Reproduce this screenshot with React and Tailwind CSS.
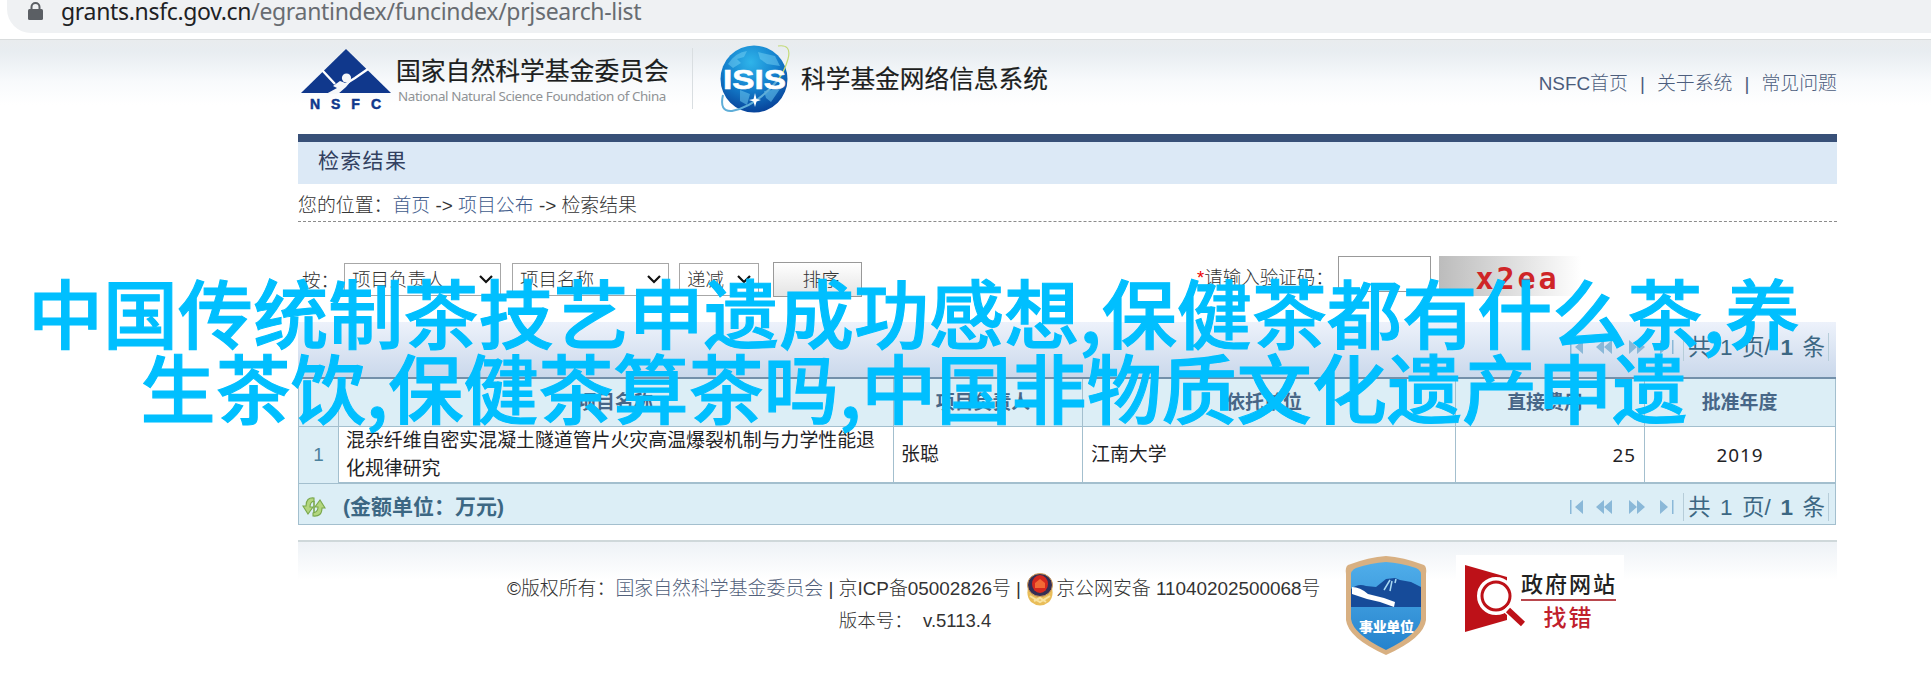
import clsx from 'clsx';

const columns = [
  { title: '项目名称', offset: 'pr-[2px]' },
  { title: '项目负责人', offset: 'pr-[10px]' },
  { title: '依托单位', offset: 'pr-[10px]' },
  { title: '直接费用', offset: 'pr-[10px]' },
  { title: '批准年度', offset: 'pr-[3px]' }
];

const grid = 'grid grid-cols-[40px_555px_189px_373px_189px_192px]';

function NsfcLogo() {
  return (
    <svg className="w-[90px] h-[64px] shrink-0" viewBox="0 0 90 64">
      <path d="M45 0 90 44H0Z" fill="#10388c" />
      <path d="M21 21 34 35M67 20 54 29 46 34" fill="none" stroke="#fff" strokeWidth="2.4" />
      <path d="M32 37 39 32Q42 33 44 34L50 32 45 38 37 45H25L36 39Z" fill="#f6f8fa" />
      <circle cx="45.5" cy="29" r="4.6" fill="#f6f8fa" />
      <text x="9" y="60" fontSize="14" fontWeight="700" fill="#10388c" stroke="#10388c" strokeWidth=".5" textLength="71" lengthAdjust="spacing" fontFamily="Liberation Sans, sans-serif">NSFC</text>
    </svg>
  );
}

function IsisLogo() {
  return (
    <svg className="w-[70px] h-[70px] shrink-0" viewBox="0 0 70 70">
      <defs>
        <radialGradient id="globe" cx=".45" cy=".25" r=".8">
          <stop offset="0" stopColor="#2fb4ea" />
          <stop offset=".5" stopColor="#1480cd" />
          <stop offset="1" stopColor="#063b93" />
        </radialGradient>
      </defs>
      <circle cx="34" cy="35" r="33.5" fill="url(#globe)" />
      <path d="M8 20Q16 8 27 7L24 13 17 15 21 19 13 24ZM38 8 55 12 60 22 47 20 40 15ZM20 46 30 50 27 61 20 57ZM44 47 60 45 51 58 46 54Z" fill="#74d0f3" opacity=".5" />
      <path d="M58 2Q72 0 68 15Q64 29 57 37" fill="none" stroke="#c3da76" strokeWidth="1.2" />
      <path d="M3 51Q-1 68 12 67Q36 62 57 37" fill="none" stroke="#5faed8" strokeWidth="2" />
      <text x="3" y="45" fontSize="28" fontWeight="700" fill="#fff" stroke="#fff" strokeWidth=".6" textLength="63" lengthAdjust="spacingAndGlyphs" fontFamily="Liberation Sans, sans-serif">ISIS</text>
      <path d="M35 49 36.5 55 41 56 36.5 57.5 35 63 33.5 57.5 29 56 33.5 55Z" fill="#fff" />
    </svg>
  );
}

function PoliceBadge() {
  return (
    <svg className="w-[28px] h-[33px] shrink-0" viewBox="0 0 28 33">
      <path d="M3 12Q-1 22 5 29Q14 36 23 29Q29 22 25 12Z" fill="#e9bd59" />
      <path d="M4 23 14 29 24 23M8 28 14 25 20 29" fill="none" stroke="#f8e3a0" strokeWidth="2" />
      <ellipse cx="14" cy="12" rx="12.5" ry="11.5" fill="#342e55" stroke="#d9a25b" strokeWidth="1" />
      <ellipse cx="14" cy="11" rx="8" ry="9" fill="#d5281f" />
      <path d="M9 10 14 6 19 10V15H9Z" fill="#f36a35" />
    </svg>
  );
}

function ShieldBadge() {
  return (
    <svg className="w-[82px] h-[100px] shrink-0" viewBox="0 0 82 100">
      <defs>
        <linearGradient id="shield" x1="0" y1="0" x2="0" y2="1">
          <stop offset="0" stopColor="#50aeea" />
          <stop offset="1" stopColor="#2583cd" />
        </linearGradient>
      </defs>
      <path d="M41 0Q58 1 79 9Q82 11 81 18V64Q79 82 41 99Q3 82 1 64V18Q0 11 3 9Q24 1 41 0Z" fill="#d8b082" />
      <path d="M41 6Q56 7 71 12Q77 14 76 22V63Q74 78 41 94Q8 78 6 63V22Q5 14 11 12Q26 7 41 6Z" fill="url(#shield)" />
      <path d="M6 33Q13 27 21 30L31 31 41 23 50 22 55 24 66 26 76 31V51H6Z" fill="#164b99" />
      <path d="M7 31Q15 31 23 38L39 42 50 46 49 51 35 46 22 43 7 38Z" fill="#fff" />
      <path d="M45 24 39 34M47 25 45 35M51 23 50 27" stroke="#a8d8f2" strokeWidth="1.5" />
      <text x="14" y="76" fontSize="14" fontWeight="900" fill="#fff" textLength="55" fontFamily="Noto Sans CJK SC, sans-serif">事业单位</text>
    </svg>
  );
}

function ErrorReportBadge() {
  return (
    <div className="flex w-[168px] h-[86px] bg-white pt-[9px] pl-[9px]">
      <svg className="w-[60px] h-[70px] shrink-0" viewBox="0 0 60 70">
        <path d="M0 1 42 13V56L0 68Z" fill="#bd1118" />
        <circle cx="31" cy="32" r="16" fill="#bd1118" stroke="#fff" strokeWidth="6" />
        <circle cx="31" cy="32" r="14" fill="#fff" stroke="#bd1118" strokeWidth="3" />
        <path d="M41 44 59 61" stroke="#fff" strokeWidth="9" />
        <path d="M43 46 58 60" stroke="#bd1118" strokeWidth="6" />
      </svg>
      <div className="w-[95px] ml-[-4px] mt-[8px] text-center">
        <div className="h-[29px] border-b-2 border-[#b9474d] text-[22px] leading-[25px] tracking-[2px] font-medium text-[#222] whitespace-nowrap">政府网站</div>
        <div className="text-[23px] leading-[35px] tracking-[2px] text-[#c0202b] font-medium">找错</div>
      </div>
    </div>
  );
}

function RefreshIcon() {
  return (
    <svg className="w-[24px] h-[20px] shrink-0" viewBox="0 0 24 20" fill="#b3d67f" stroke="#7aa84c" strokeWidth="1.1">
      <path d="M12 1Q4 0 4 9H1L6 17 11 10H8Q8 5 12 4Z" />
      <path d="M11 19Q20 20 20 11H23L18 3 13 10H16Q16 15 11 16Z" />
      <path d="M12 4V16" strokeWidth="1.6" />
    </svg>
  );
}

function Pager({ className }) {
  return (
    <div className={clsx('flex items-center text-[#3c6783]', className)}>
      <svg className="w-[104px] h-[16px] mr-[9px]" viewBox="0 0 104 16" fill="#8ab8d8">
        <path d="M0 1H1.5V15H0ZM13 1V15L5 8ZM34 1V15L26 8ZM42 1V15L34 8ZM59 1V15L67 8ZM67 1V15L75 8ZM90 1V15L98 8ZM102 1H103.5V15H102Z" />
      </svg>
      <div className="flex items-center justify-between w-[146px] h-[28px] border-x border-[#b6cdd9] pl-[4px] pr-[3px] pt-[2px] text-[22.5px] leading-[28px] whitespace-nowrap">
        <span>共</span><span>1</span><span>页/</span><b>1</b><span>条</span>
      </div>
    </div>
  );
}

function Select({ label, className }) {
  return (
    <div className={clsx('flex h-[33px] items-center justify-between border border-[#a7a7a7] bg-white pl-[7px] pr-[7px]', className)}>
      <span>{label}</span>
      <svg className="w-[14px] h-[9px]" viewBox="0 0 14 9" fill="none" stroke="#111" strokeWidth="2.2">
        <path d="m1 1 6 6 6-6" />
      </svg>
    </div>
  );
}

function AddressBar() {
  return (
    <div className="h-[40px] bg-white border-b border-[#d9dcdd] pl-[7px]">
      <div className="flex h-[33px] bg-[#eff1f3] rounded-bl-[24px] pl-[21px]">
        <svg className="w-[15px] h-[18px] mt-[2px]" viewBox="0 0 15 18">
          <path d="M3.5 8V5a4 4 0 0 1 8 0v3" fill="none" stroke="#5b5f64" strokeWidth="2" />
          <rect y="7" width="15" height="11" rx="1.5" fill="#5b5f64" />
        </svg>
        <span className="ml-[18px] mt-[-4px] text-[23px] leading-[30px] tracking-[-0.32px] text-[#686c71] font-['Noto_Sans']">
          <span className="text-[#202124]">grants.nsfc.gov.cn</span>/egrantindex/funcindex/prjsearch-list
        </span>
      </div>
    </div>
  );
}

function Header() {
  return (
    <header className="flex h-[94px] pl-[3px]">
      <div className="mt-[9px]"><NsfcLogo /></div>
      <div className="ml-[5px] mt-[15px] w-[276px]">
        <div className="text-[24.8px] leading-[34px] text-[#1c1e20] whitespace-nowrap [-webkit-text-stroke:0.2px_#1c1e20]">国家自然科学基金委员会</div>
        <div className="mt-[-1px] pl-[2px] text-[13.4px] leading-[16px] tracking-[-0.4px] text-[#8f9295] whitespace-nowrap font-['Noto_Sans']">National Natural Science Foundation of China</div>
      </div>
      <div className="ml-[20px] mt-[8px] h-[61px] w-px bg-[#d9dee1]" />
      <div className="ml-[27px] mt-[4px]"><IsisLogo /></div>
      <div className="ml-[11px] mt-[21px] text-[24.7px] leading-[38px] text-[#1c1e20] [-webkit-text-stroke:0.2px_#1c1e20]">科学基金网络信息系统</div>
      <nav className="ml-auto mt-[31px] flex text-[18.9px] leading-[26px] text-[#4c5d7c] font-light">
        <span>NSFC首页</span>
        <span className="w-[29px] text-center">|</span>
        <span>关于系统</span>
        <span className="w-[29px] text-center">|</span>
        <span>常见问题</span>
      </nav>
    </header>
  );
}

function SortBar() {
  return (
    <div className="flex h-[100px] pt-[41px] text-[18.5px] font-light text-[#333]">
      <span className="ml-[4px] mt-[4px] w-[42px]">按：</span>
      <Select label="项目负责人" className="w-[157px]" />
      <Select label="项目名称" className="ml-[11px] w-[157px]" />
      <Select label="递减" className="ml-[10px] w-[80px]" />
      <div className="ml-[14px] mt-[-1px] flex h-[35px] w-[89px] items-center justify-center border border-[#999] bg-linear-to-b from-white to-[#e4e4e4] pl-[7px]">排序</div>
      <span className="ml-[335px] mt-[1px] w-[141px] whitespace-nowrap"><span className="text-[#e00]">*</span>请输入验证码：</span>
      <div className="mt-[-7px] h-[36px] w-[93px] border border-[#999]" />
      <div className="ml-[8px] mt-[-7px] flex h-[40px] w-[142px] justify-center bg-linear-to-r from-[#bcbcbc] to-white pl-[15px] font-['DejaVu_Sans_Mono'] text-[30px] leading-[46px] font-bold tracking-[3px] text-[#cf2527]">x2ea</div>
    </div>
  );
}

function ResultTable() {
  return (
    <section className="w-[1538px] text-[18.9px] text-[#1f2326]">
      <div className="flex h-[57px] items-start justify-end border-b-2 border-[#7390aa] bg-linear-to-b from-[#edf2fb] to-[#cad8eb]">
        <Pager className="mt-[11px] mr-[7px]" />
      </div>
      <div className="border border-t-0 border-[#a3bfce]">
        <div className={clsx(grid, 'h-[48px] divide-x divide-[#a3bfce] border-b border-[#a3bfce] bg-[#dceef6] font-bold text-[#476687]')}>
          <div />
          {columns.map(({ title, offset }) => (
            <div key={title} className={clsx('flex items-center justify-center pt-[2px]', offset)}>{title}</div>
          ))}
        </div>
        <div className={clsx(grid, 'h-[55px] divide-x divide-[#a3bfce] bg-white')}>
          <div className="flex items-center justify-center bg-[#dceef6] text-[#4c819c]">1</div>
          <div className="pl-[7px] leading-[28px]">混杂纤维自密实混凝土隧道管片火灾高温爆裂机制与力学性能退<br />化规律研究</div>
          <div className="flex items-center pl-[7px]">张聪</div>
          <div className="flex items-center pl-[8px]">江南大学</div>
          <div className="flex items-center justify-end pr-[8px] tracking-[1px] font-['Noto_Sans']">25</div>
          <div className="flex items-center justify-center pr-[2px] tracking-[1px] font-['Noto_Sans']">2019</div>
        </div>
        <div className="flex h-[42px] items-center border-t-2 border-[#a3bfce] bg-[#dceef6] pt-[5px] pl-[3px]">
          <RefreshIcon />
          <span className="ml-[17px] text-[21px] leading-[28px] font-bold text-[#3c6783]">(金额单位：万元)</span>
          <Pager className="ml-auto mr-[6px]" />
        </div>
      </div>
    </section>
  );
}

function Footer() {
  return (
    <footer className="mt-[15px] flex h-[144px] border-t-2 border-[#cfd8da] bg-[linear-gradient(#eef2f6,#ffffff_38px)]">
      <div className="ml-[209px] mt-[30px] w-[816px] text-[18.9px] font-light text-[#333]">
        <div className="flex h-[34px] items-center whitespace-pre">
          <span>©版权所有：<span className="text-[#51607a]">国家自然科学基金委员会</span> | 京ICP备05002826号 | </span>
          <PoliceBadge />
          <span className="ml-[2px]">京公网安备 11040202500068号</span>
        </div>
        <div className="text-center text-[18.5px] leading-[30px] whitespace-pre">版本号：  v.5113.4</div>
      </div>
      <div className="ml-[22px] mt-[14px]"><ShieldBadge /></div>
      <div className="ml-[29px] mt-[13px]"><ErrorReportBadge /></div>
    </footer>
  );
}

function App() {
  return (
    <div className="relative h-[685px] w-[1931px] overflow-hidden bg-white font-['Liberation_Sans','Noto_Sans_CJK_SC',sans-serif]">
      <AddressBar />
      <div className="h-[645px] bg-[linear-gradient(#e9ecee,#e8edf1_12px,#f8fafc_42px,#ffffff_65px)] pl-[298px]">
        <main className="w-[1539px]">
          <Header />
          <h1 className="h-[50px] border-t-8 border-[#385078] bg-[#dce9f6] pl-[20px] text-[21px] leading-[37px] tracking-[1.3px] text-[#32405f]">检索结果</h1>
          <div className="h-[38px] border-b border-dashed border-[#8c8c8c] pt-[8px] text-[18.9px] leading-[28px] font-light text-[#333]">
            您的位置：<span className="text-[#3f5c8c]">首页</span> <span className="font-normal">-&gt;</span> <span className="text-[#3f5c8c]">项目公布</span> <span className="font-normal">-&gt;</span> 检索结果
          </div>
          <SortBar />
          <ResultTable />
          <Footer />
        </main>
      </div>
      {/* Caption laid over the page */}
      <div className="absolute left-0 top-[273px] w-[1828px] text-center font-['Noto_Sans_CJK_SC',sans-serif] text-[75px] leading-[75px] tracking-[0.1px] font-medium whitespace-nowrap text-[#00bfff] [-webkit-text-stroke:1.1px_#00bfff]">
        中国传统制茶技艺申遗成功感想,保健茶都有什么茶,养<br />生茶饮,保健茶算茶吗,中国非物质文化遗产申遗
      </div>
    </div>
  );
}

export default App;
